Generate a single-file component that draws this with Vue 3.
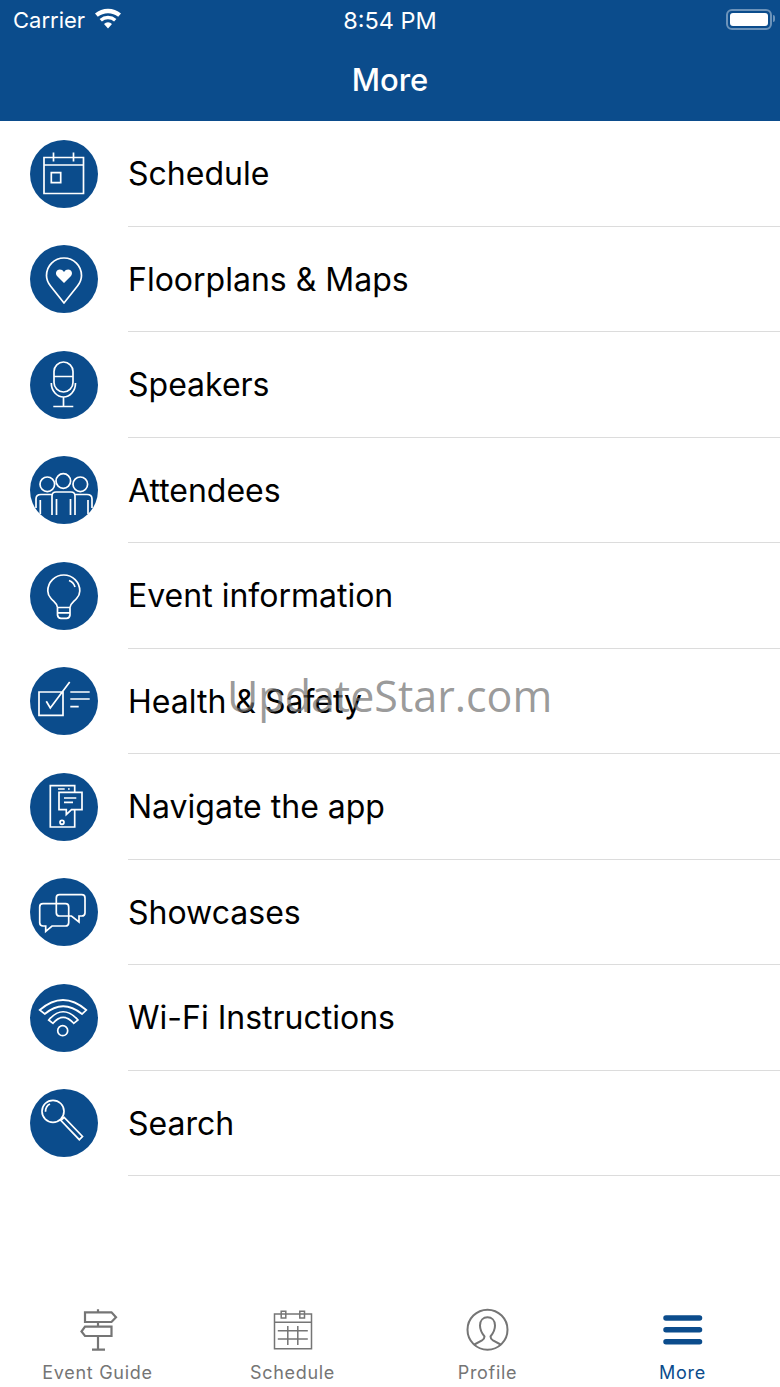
<template>
  <div class="screen">
    <header class="top">
      <div class="status">
        <div class="status-left">
          <span>Carrier</span>
          <svg class="wifi" width="28" height="21" viewBox="0 0 28 21">
            <path d="M14 20.5l-4-4.6a6 6 0 0 1 8 0zM7.9 13.5L5.6 10.9a13 13 0 0 1 16.8 0l-2.3 2.6a9.400 9.400 0 0 0-12.200 0zM3.800 8.800L1 5.600a20 20 0 0 1 26 0l-2.800 3.200a16 16 0 0 0-20.400 0z" fill="#fff" />
          </svg>
        </div>
        <span class="time">8:54 PM</span>
        <div class="battery">
          <div class="battery-fill"></div>
          <div class="battery-nub"></div>
        </div>
      </div>
      <h1 class="title">More</h1>
    </header>

    <ul class="menu">
      <li v-for="item in menu" :key="item.label" class="row">
        <svg class="badge" width="68" height="68" viewBox="0 0 68 68">
          <circle cx="34" cy="34" r="34" fill="#0b4c8c" />
          <path :d="item.d" fill="none" stroke="#fff" stroke-width="1.7" />
          <path v-if="item.fill" :d="item.fill" fill="#fff" />
        </svg>
        <div class="row-body">{{ item.label }}</div>
      </li>
    </ul>

    <nav class="tabs">
      <div v-for="tab in tabs" :key="tab.label" class="tab" :class="{ active: tab.active }">
        <svg width="60" height="46" viewBox="0 0 60 46">
          <path :d="tab.d" fill="none" stroke="currentColor" :stroke-width="tab.width" :stroke-linecap="tab.active ? 'round' : 'butt'" />
        </svg>
        <span>{{ tab.label }}</span>
      </div>
    </nav>

    <div class="watermark">UpdateStar.com</div>
  </div>
</template>

<script setup>
const menu = [
  {
    label: 'Schedule',
    d: 'M14 17.500H53.500V53.500H14ZM14 25H53.500M23.500 12.500V21.500M43.500 12.500V21.500M21.300 32.700H30.700V42.700H21.300Z'
  },
  {
    label: 'Floorplans & Maps',
    d: 'M34 58L20.500 41C17.800 37.500 16.500 34 16.500 30.500C16.500 20.800 24.300 13 34 13C43.700 13 51.500 20.800 51.500 30.500C51.500 34 50.200 37.500 47.500 41Z',
    fill: 'M34 38L27 31C25 28.800 26 24.500 29.800 24.500C31.500 24.500 33 25.300 34 27C35 25.300 36.500 24.500 38.200 24.500C42 24.500 43 28.800 41 31Z'
  },
  {
    label: 'Speakers',
    d: 'M24 20.500A9.500 9.500 0 0 1 43 20.500V31.500A9.500 9.500 0 0 1 24 31.500ZM24 25.500H43M21.300 32C21.300 40 27 46 33.500 46C40 46 45.500 40 45.500 32M33.500 46V55M23.300 55.500H43.300'
  },
  {
    label: 'Attendees',
    d: 'M26 25a7.300 7.300 0 1 0 14.600 0a7.300 7.300 0 1 0-14.600 0ZM10 28.300a7.300 7.300 0 1 0 14.600 0a7.300 7.300 0 1 0-14.600 0ZM43 28.300a7.300 7.300 0 1 0 14.600 0a7.300 7.300 0 1 0-14.600 0ZM22 59V40Q22 36 26 36H41Q45 36 45 40V59M26.500 43V59M40.500 43V59M22 38.500H11Q6 38.500 6 43V52M10.300 44V58M45 38.500H57Q62 38.500 62 43V52M58 44V58'
  },
  {
    label: 'Event information',
    d: 'M27.500 45.500C27 41 24 40 21 36.500C18.800 34 17.800 32 17.800 29A16 16 0 0 1 49.800 29C49.800 32 48.800 34 46.600 36.500C43.600 40 40.600 41 40 45.500ZM27.500 46V53Q28 56.300 31 56.300H36.500Q39.500 56.300 40 53V46M27.500 50.800H40M39 18.500Q43.500 20 45 25'
  },
  {
    label: 'Health & Safety',
    d: 'M9 25H33V48.300H9ZM16.300 34.300L20.300 41L39.700 15M40.300 25H59.700M40.300 32H59.700M40.300 39.700H48.700'
  },
  {
    label: 'Navigate the app',
    d: 'M44.700 19.300V12.700H20.300V54H44.700V36.700M29 19.300H52V36.700H41.500L36.300 41.500V36.700H29ZM28 16H34.700M38 16H39.700M34 25H46.300M34 29.300H43M30 49.300a2 2 0 1 0 4 0a2 2 0 1 0-4 0Z'
  },
  {
    label: 'Showcases',
    d: 'M13 25.700H35.500Q38.700 25.700 38.700 29V44.700Q38.700 48 35.500 48H22L15.700 53.300V48H13Q9.700 48 9.700 44.700V29Q9.700 25.700 13 25.700ZM29.500 16.700H51.800Q55 16.700 55 20V34.700Q55 38 51.800 38H49V44L41.500 38H29.500Q26.300 38 26.300 34.700V20Q26.300 16.700 29.500 16.700Z'
  },
  {
    label: 'Wi-Fi Instructions',
    d: 'M9.700 26Q33 6 56.300 26L52 30Q33 14.500 14.700 30ZM18.700 36Q33 19.500 48 36L43.700 39.300Q33 27.500 23 39.300ZM27.700 46.700a5 5 0 1 0 10 0a5 5 0 1 0-10 0Z'
  },
  {
    label: 'Search',
    d: 'M12 22.300a11 11 0 1 0 22 0a11 11 0 1 0-22 0ZM15.500 22.800Q15.500 17 20 15M31 31.500L34.200 28.500L52.500 47.500L49.300 50.700Z'
  }
]

const tabs = [
  {
    label: 'Event Guide',
    width: 2.2,
    d: 'M17 4.300H43.500L48 9.300L43.500 14H17ZM43.500 18.700H17L13.500 23.500L17 28H43.500ZM30 1.300V4.300M30 14V18.700M30 28V42M24 41.700H37'
  },
  {
    label: 'Schedule',
    width: 1.5,
    d: 'M11.500 6H48.500V40.700H11.500ZM11.500 14.300H48.500M18.200 3.300H22.800V10H18.200ZM36.800 3.300H41.500V10H36.800ZM14.800 22.700H44.800M14.800 31H44.800M24.800 18V37M34.800 18V37'
  },
  {
    label: 'Profile',
    width: 2,
    d: 'M9.500 21.700a20 20 0 1 0 40 0a20 20 0 1 0-40 0ZM15.500 37L24 32.500Q26.500 31 26.500 28.500C24 25.500 22 22.500 22 17.500C22 12 25.500 9.300 29.500 9.300C33.500 9.300 37 12 37 17.500C37 22.500 35 25.500 32.500 28.500Q32.500 31 35 32.500L43.500 37'
  },
  {
    label: 'More',
    width: 5.5,
    active: true,
    d: 'M13 10H46.500M13 21.800H46.500M13 33.800H46.500'
  }
]
</script>

<style scoped>
.screen {
  position: relative;
  display: flex;
  flex-direction: column;
  height: 1387px;
  background: #fff;
  font-family: Inter, "Liberation Sans", sans-serif;
  overflow: hidden;
}

.top {
  height: 121px;
  background: #0b4c8c;
  color: #fff;
}

.status {
  display: flex;
  justify-content: space-between;
  align-items: center;
  height: 40px;
  padding: 0 8px 0 13px;
  font-size: 22px;
  position: relative;
}

.status-left {
  display: flex;
  align-items: center;
  gap: 9px;
}

.wifi {
  margin-top: -3px;
}

.time {
  position: absolute;
  left: 0;
  right: 0;
  text-align: center;
  font-size: 23.5px;
}

.battery {
  position: relative;
  width: 46px;
  height: 21px;
  margin-top: -2px;
  border: 2px solid rgba(255, 255, 255, 0.4);
  border-radius: 6px;
  padding: 2px;
  box-sizing: border-box;
}

.battery-fill {
  height: 100%;
  background: #fff;
  border-radius: 3px;
}

.battery-nub {
  position: absolute;
  top: 4px;
  right: -5px;
  width: 2px;
  height: 7px;
  background: rgba(255, 255, 255, 0.4);
  border-radius: 0 2px 2px 0;
}

.title {
  margin: 21px 0 0;
  text-align: center;
  font-size: 31px;
  font-weight: 500;
  line-height: 38px;
}

.menu {
  flex: 1;
  list-style: none;
  margin: 0;
  padding: 0;
  display: grid;
  grid-auto-rows: 105.5px;
}

.row {
  display: flex;
  align-items: center;
}

.badge {
  flex: none;
  margin: 0 30px;
}

.row-body {
  flex: 1;
  align-self: stretch;
  display: flex;
  align-items: center;
  padding-top: 1px;
  border-bottom: 1px solid #dcdcdc;
  font-size: 32px;
  color: #000;
}

.tabs {
  display: grid;
  grid-template-columns: repeat(4, 1fr);
  height: 79px;
}

.tab {
  display: flex;
  flex-direction: column;
  align-items: center;
  color: #757575;
  font-size: 18px;
  letter-spacing: 0.7px;
}

.tab span {
  margin-top: 8px;
  line-height: 22px;
}

.tab.active {
  color: #0b4c8c;
}

.watermark {
  position: absolute;
  left: 227px;
  top: 667px;
  font-family: "Open Sans", sans-serif;
  font-size: 43px;
  line-height: 58px;
  color: rgba(110, 110, 110, 0.7);
}
</style>
